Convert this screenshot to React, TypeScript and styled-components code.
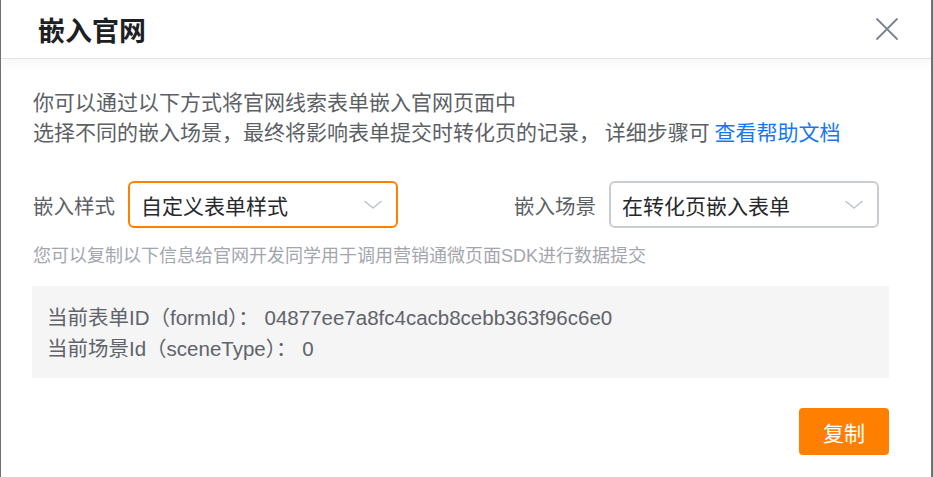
import styled, { createGlobalStyle } from "styled-components";

const GlobalStyle = createGlobalStyle`
  html, body {
    margin: 0;
    padding: 0;
    background: #707070;
  }
  body {
    font-family: "Liberation Sans", "Noto Sans CJK SC", sans-serif;
  }
`;

const ChevronDown = () => (
  <svg width="18" height="10" viewBox="0 0 18 10" fill="none">
    <path d="M1 1.5L9 8L17 1.5" stroke="#c0c4cc" strokeWidth="1.6" strokeLinecap="round" strokeLinejoin="round" />
  </svg>
);

const CloseIcon = () => (
  <svg width="24" height="24" viewBox="0 0 24 24" fill="none">
    <path d="M2 2L22 22M22 2L2 22" stroke="#7b8393" strokeWidth="1.8" strokeLinecap="round" />
  </svg>
);

const App = () => {
  return (
    <>
      <GlobalStyle />
      <Dialog>
        <Header>
          <Title>嵌入官网</Title>
          <CloseButton aria-label="关闭">
            <CloseIcon />
          </CloseButton>
        </Header>
        <Body>
          <Intro>
            <p>你可以通过以下方式将官网线索表单嵌入官网页面中</p>
            <p>
              选择不同的嵌入场景，最终将影响表单提交时转化页的记录， 详细步骤可 <HelpLink href="#">查看帮助文档</HelpLink>
            </p>
          </Intro>
          <FieldRow>
            <Field>
              <Label>嵌入样式</Label>
              <Select $active>
                <span>自定义表单样式</span>
                <ChevronDown />
              </Select>
            </Field>
            <Field>
              <Label>嵌入场景</Label>
              <Select>
                <span>在转化页嵌入表单</span>
                <ChevronDown />
              </Select>
            </Field>
          </FieldRow>
          <Hint>您可以复制以下信息给官网开发同学用于调用营销通微页面SDK进行数据提交</Hint>
          <InfoBox>
            <InfoLine>当前表单ID（formId）： 04877ee7a8fc4cacb8cebb363f96c6e0</InfoLine>
            <InfoLine>当前场景Id（sceneType）： 0</InfoLine>
          </InfoBox>
          <Footer>
            <CopyButton>复制</CopyButton>
          </Footer>
        </Body>
      </Dialog>
    </>
  );
};

export default App;

const Dialog = styled.div`
  margin-left: 1px;
  width: 930px;
  height: 477px;
  background: #fff;
  display: flex;
  flex-direction: column;
  overflow: hidden;
`;

const Header = styled.div`
  position: relative;
  z-index: 1;
  height: 58px;
  flex-shrink: 0;
  display: flex;
  align-items: center;
  justify-content: space-between;
  padding: 0 32px 0 37px;
  border-bottom: 1px solid #e0e2e7;
  box-shadow: 0 3px 10px rgba(30, 40, 60, 0.05);
`;

const Title = styled.h1`
  margin: 0;
  font-family: "Noto Sans CJK SC", sans-serif;
  font-size: 27px;
  font-weight: 700;
  color: #1d1f24;
  line-height: 1;
`;

const CloseButton = styled.button`
  display: flex;
  padding: 0;
  border: none;
  background: none;
  cursor: pointer;
`;

const Body = styled.div`
  padding: 27px 42px 0 32px;
  display: flex;
  flex-direction: column;
`;

const Intro = styled.div`
  font-family: "Noto Sans CJK SC", sans-serif;
  font-size: 21px;
  line-height: 30px;
  color: #5c5f66;

  p {
    margin: 0;
  }
`;

const HelpLink = styled.a`
  color: #1677f5;
  text-decoration: none;
`;

const FieldRow = styled.div`
  display: flex;
  justify-content: space-between;
  align-items: center;
  margin-top: 35px;
  padding-right: 10px;
`;

const Field = styled.div`
  display: flex;
  align-items: center;
  gap: 13px;
`;

const Label = styled.span`
  font-family: "Noto Sans CJK SC", sans-serif;
  font-size: 20.5px;
  color: #5c5f66;
`;

const Select = styled.div<{ $active?: boolean }>`
  box-sizing: border-box;
  width: 270px;
  height: 47px;
  display: flex;
  align-items: center;
  justify-content: space-between;
  padding: 0 14px 0 11px;
  border: ${({ $active }) => ($active ? "2px solid #ff8000" : "2px solid #c9ccd3")};
  border-radius: 6px;
  font-family: "Noto Sans CJK SC", sans-serif;
  font-size: 21px;
  color: #26282d;
  background: #fff;
`;

const Hint = styled.div`
  margin-top: 16px;
  font-family: "Liberation Sans", "Noto Sans CJK SC", sans-serif;
  font-size: 18px;
  line-height: 24px;
  color: #a3a6ad;
`;

const InfoBox = styled.div`
  margin-top: 18px;
  margin-left: -1px;
  height: 92px;
  box-sizing: border-box;
  padding: 16px 16px 0 15px;
  background: #f5f5f5;
`;

const InfoLine = styled.div`
  font-family: "Liberation Sans", "Noto Sans CJK SC", sans-serif;
  font-size: 20.5px;
  line-height: 31px;
  color: #60636a;
`;

const Footer = styled.div`
  display: flex;
  justify-content: flex-end;
  margin-top: 30px;
`;

const CopyButton = styled.button`
  width: 90px;
  height: 47px;
  border: none;
  border-radius: 4px;
  background: #ff8000;
  color: #fff;
  font-family: "Noto Sans CJK SC", sans-serif;
  font-size: 21px;
  cursor: pointer;
`;
